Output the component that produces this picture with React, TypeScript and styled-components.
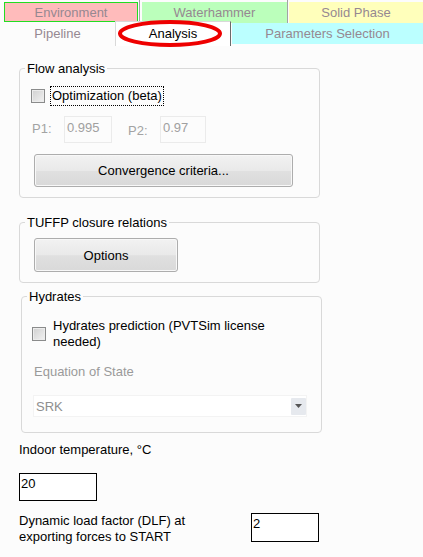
import React from 'react';
import styled, { createGlobalStyle } from 'styled-components';

const GlobalStyle = createGlobalStyle`
    html, body {
        margin: 0;
        padding: 0;
        background: #fcfcfc;
    }
    body {
        font-family: "Liberation Sans", Arial, sans-serif;
        font-size: 13px;
        line-height: 15px;
        color: #000;
    }
`;

const Page = styled.div`
    width: 423px;
    height: 557px;
    overflow: hidden;
    background: #fcfcfc;
`;

const TabBar = styled.div`
    position: relative;
    height: 46px;
`;

const TopRow = styled.div`
    display: flex;
    height: 23px;
    padding: 2px 0 0 4px;
    box-sizing: border-box;
`;

const TopTab = styled.div<{ $bg: string; $width?: number; $border?: string }>`
    box-sizing: border-box;
    ${p => (p.$width ? `width: ${p.$width}px;` : 'flex: 1;')}
    height: ${p => (p.$border ? '20px' : '21px')};
    background: ${p => p.$bg};
    border: ${p => (p.$border ? `1px solid ${p.$border}` : 'none')};
    color: #968891;
    display: flex;
    align-items: center;
    justify-content: center;
`;

const TabSep = styled.div<{ $left: number; $right: number }>`
    width: 1px;
    margin: -2px ${p => p.$right}px 0 ${p => p.$left}px;
    height: 23px;
    background: #a3a3a3;
`;

const BottomRow = styled.div`
    display: flex;
    height: 23px;
    align-items: flex-start;
`;

const SubTab = styled.div<{ $bg?: string; $width?: number }>`
    box-sizing: border-box;
    ${p => (p.$width ? `width: ${p.$width}px;` : 'flex: 1;')}
    height: 21px;
    background: ${p => p.$bg || 'transparent'};
    color: #968891;
    display: flex;
    align-items: center;
    justify-content: center;
`;

const ActiveTab = styled.div`
    position: relative;
    z-index: 1;
    box-sizing: border-box;
    width: 116px;
    height: 25px;
    margin: -2px 1px 0 0;
    background: #fff;
    border-top: 1px solid #d9d9d9;
    border-left: 1px solid #d9d9d9;
    border-right: 1px solid #6a6a6a;
    color: #000;
    display: flex;
    align-items: center;
    justify-content: center;
    padding-bottom: 1px;
`;

const Highlight = styled.svg`
    position: absolute;
    left: 116px;
    top: 18px;
    z-index: 2;
    pointer-events: none;
`;

const Content = styled.div`
    display: flex;
    flex-direction: column;
    align-items: flex-start;
    padding: 15px 0 0 19px;
`;

const Group = styled.fieldset<{ $top: number; $left?: number }>`
    box-sizing: border-box;
    width: 301px;
    min-width: 0;
    margin: ${p => p.$top}px 0 0 ${p => p.$left || 0}px;
    padding: 0;
    border: 1px solid #d9d9d9;
    border-radius: 4px;
`;

const Legend = styled.legend`
    margin-left: 5px;
    padding: 0 2px;
    line-height: 15px;
`;

const GroupBody = styled.div<{ $pad: string }>`
    display: flex;
    flex-direction: column;
    align-items: flex-start;
    padding: ${p => p.$pad};
`;

const CheckRow = styled.div<{ $left: number; $gap: number }>`
    display: flex;
    align-items: center;
    margin-left: ${p => p.$left}px;
    gap: ${p => p.$gap}px;
`;

const CheckBox = styled.span`
    box-sizing: border-box;
    width: 14px;
    height: 14px;
    border: 1px solid #8a8b8b;
    background: linear-gradient(135deg, #d0d0d0, #f2f2f2);
    box-shadow: inset 0 0 0 1px #ececec;
    flex-shrink: 0;
`;

const FocusLabel = styled.span`
    border: 1px dotted #000;
    padding: 0 1px;
    line-height: 18px;
`;

const WrapLabel = styled.span`
    width: 240px;
    line-height: 16px;
`;

const ParamRow = styled.div`
    display: flex;
    align-items: flex-start;
    margin: 10px 0 0 12px;
`;

const ParamLabel = styled.span<{ $shift: number; $left?: number }>`
    width: 32px;
    margin: ${p => p.$shift}px 0 0 ${p => p.$left || 0}px;
    color: #a3a3a3;
`;

const ParamField = styled.div<{ $width: number }>`
    box-sizing: border-box;
    width: ${p => p.$width}px;
    height: 27px;
    border: 1px solid #ebebeb;
    padding: 3px 2px 0;
    color: #a0a0a0;
`;

const Button = styled.button<{ $width: number; $top: number; $height?: number }>`
    box-sizing: border-box;
    width: ${p => p.$width}px;
    height: ${p => p.$height || 33}px;
    margin: ${p => p.$top}px 0 0 14px;
    border: 1px solid #adadad;
    border-radius: 3px;
    background: linear-gradient(#f2f2f2, #e9e9e9 50%, #e0e0e0 52%, #d9d9d9);
    box-shadow: inset 0 0 0 1px #f8f8f8;
    font-family: inherit;
    font-size: 13px;
    color: #000;
    padding: 0;
`;

const GrayText = styled.div`
    margin: 14px 0 0 12px;
    color: #9a9a9a;
`;

const Combo = styled.div`
    box-sizing: border-box;
    width: 274px;
    height: 22px;
    margin: 16px 0 0 11px;
    border: 1px solid #f3f3f3;
    background: #fff;
    display: flex;
    align-items: center;
    justify-content: space-between;
    padding-left: 2px;
    color: #8e8e8e;
`;

const DropButton = styled.div`
    width: 15px;
    height: 17px;
    background: #e6e9ee;
    border-radius: 1px;
    display: flex;
    align-items: center;
    justify-content: center;
`;

const Label = styled.div<{ $top: number }>`
    margin-top: ${p => p.$top}px;
`;

const Field = styled.div<{ $width: number; $height: number; $top?: number }>`
    box-sizing: border-box;
    width: ${p => p.$width}px;
    height: ${p => p.$height}px;
    margin-top: ${p => p.$top || 0}px;
    border: 1px solid #000;
    background: #fff;
    padding: 2px 1px 0;
`;

const FactorRow = styled.div`
    display: flex;
    align-items: flex-start;
    width: 300px;
    margin-top: 12px;
`;

const FactorLabel = styled.div`
    width: 210px;
    line-height: 16px;
`;

const FieldRight = styled(Field)`
    margin-left: auto;
`;

export default function App() {
    return (
        <Page>
            <GlobalStyle />
            <TabBar>
                <TopRow>
                    <TopTab $bg="#ffbbbb" $width={134} $border="#22dd22">Environment</TopTab>
                    <TabSep $left={1} $right={2} />
                    <TopTab $bg="#bbffbb" $width={145}>Waterhammer</TopTab>
                    <TabSep $left={0} $right={1} />
                    <TopTab $bg="#ffffbb">Solid Phase</TopTab>
                </TopRow>
                <BottomRow>
                    <SubTab $width={115}>Pipeline</SubTab>
                    <ActiveTab>Analysis</ActiveTab>
                    <SubTab $bg="#bbffff">Parameters Selection</SubTab>
                </BottomRow>
                <Highlight width="110" height="32" viewBox="0 0 110 32">
                    <ellipse cx="54" cy="15.5" rx="50" ry="11.5" fill="none" stroke="#ee0000" strokeWidth="4" />
                </Highlight>
            </TabBar>

            <Content>
                <Group $top={0}>
                    <Legend>Flow analysis</Legend>
                    <GroupBody $pad="10px 0 10px 0">
                        <CheckRow $left={11} $gap={5}>
                            <CheckBox />
                            <FocusLabel>Optimization (beta)</FocusLabel>
                        </CheckRow>
                        <ParamRow>
                            <ParamLabel $shift={5}>P1:</ParamLabel>
                            <ParamField $width={48}>0.995</ParamField>
                            <ParamLabel $shift={7} $left={16}>P2:</ParamLabel>
                            <ParamField $width={46}>0.97</ParamField>
                        </ParamRow>
                        <Button $width={259} $top={11}>Convergence criteria...</Button>
                    </GroupBody>
                </Group>

                <Group $top={17}>
                    <Legend>TUFFP closure relations</Legend>
                    <GroupBody $pad="8px 0 10px 0">
                        <Button $width={144} $top={0} $height={34}>Options</Button>
                    </GroupBody>
                </Group>

                <Group $top={6} $left={2}>
                    <Legend>Hydrates</Legend>
                    <GroupBody $pad="14px 0 15px 0">
                        <CheckRow $left={10} $gap={7}>
                            <CheckBox />
                            <WrapLabel>Hydrates prediction (PVTSim license needed)</WrapLabel>
                        </CheckRow>
                        <GrayText>Equation of State</GrayText>
                        <Combo>
                            SRK
                            <DropButton>
                                <svg width="7" height="4" viewBox="0 0 7 4">
                                    <path d="M0 0H7L3.5 4Z" fill="#555" />
                                </svg>
                            </DropButton>
                        </Combo>
                    </GroupBody>
                </Group>

                <Label $top={9}>Indoor temperature, °C</Label>
                <Field $width={78} $height={28} $top={16}>20</Field>

                <FactorRow>
                    <FactorLabel>Dynamic load factor (DLF) at exporting forces to START</FactorLabel>
                    <FieldRight $width={68} $height={29}>2</FieldRight>
                </FactorRow>
            </Content>
        </Page>
    );
}
